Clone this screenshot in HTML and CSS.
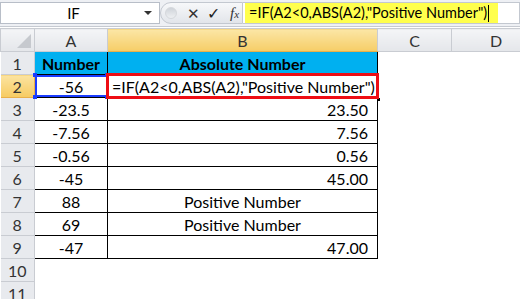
FILE: index.html
```html
<!DOCTYPE html>
<html lang="en">
<head>
    <meta charset="UTF-8">
    <title>IF ABS</title>
    <link rel="stylesheet" href="styles.css">
</head>
<body>

    <div class="formula-bar">
        <div class="name-box">
            <span class="name">IF</span>
            <span class="drop-arrow"></span>
        </div>
        <div class="fx-group">
            <span class="grip"></span>
            <span class="btn-cancel">✕</span>
            <span class="btn-enter">✓</span>
            <span class="btn-fx">f<small>x</small></span>
        </div>
        <div class="formula-input">
            <span class="formula-text">=IF(A2&lt;0,ABS(A2),"Positive Number")</span><span class="caret"></span>
        </div>
    </div>

    <table class="sheet">
        <colgroup>
            <col class="col-head">
            <col class="col-a">
            <col class="col-b">
            <col class="col-c">
            <col class="col-d">
        </colgroup>
        <thead>
            <tr>
                <th class="corner"><span class="corner-tri"></span></th>
                <th>A</th>
                <th class="sel">B</th>
                <th>C</th>
                <th>D</th>
            </tr>
        </thead>
        <tbody>
            <tr>
                <th>1</th>
                <td class="data title">Number</td>
                <td class="data title">Absolute Number</td>
                <td></td><td></td>
            </tr>
            <tr>
                <th class="sel">2</th>
                <td class="data center ref-a2">-56<span class="h tl"></span><span class="h tr"></span><span class="h bl"></span><span class="h br"></span></td>
                <td class="data editing">=IF(A2&lt;0,ABS(A2),"Positive Number")<span class="fill-handle"></span></td>
                <td></td><td></td>
            </tr>
            <tr>
                <th>3</th>
                <td class="data center">-23.5</td>
                <td class="data num">23.50</td>
                <td></td><td></td>
            </tr>
            <tr>
                <th>4</th>
                <td class="data center">-7.56</td>
                <td class="data num">7.56</td>
                <td></td><td></td>
            </tr>
            <tr>
                <th>5</th>
                <td class="data center">-0.56</td>
                <td class="data num">0.56</td>
                <td></td><td></td>
            </tr>
            <tr>
                <th>6</th>
                <td class="data center">-45</td>
                <td class="data num">45.00</td>
                <td></td><td></td>
            </tr>
            <tr>
                <th>7</th>
                <td class="data center">88</td>
                <td class="data center">Positive Number</td>
                <td></td><td></td>
            </tr>
            <tr>
                <th>8</th>
                <td class="data center">69</td>
                <td class="data center">Positive Number</td>
                <td></td><td></td>
            </tr>
            <tr>
                <th>9</th>
                <td class="data center">-47</td>
                <td class="data num">47.00</td>
                <td></td><td></td>
            </tr>
            <tr>
                <th>10</th>
                <td></td><td></td><td></td><td></td>
            </tr>
            <tr>
                <th>11</th>
                <td></td><td></td><td></td><td></td>
            </tr>
        </tbody>
    </table>

</body>
</html>
```

FILE: styles.css
```css
body {
    margin: 0;
    padding: 0;
    width: 520px;
    height: 299px;
    overflow: hidden;
    background-color: #fff;
    font-family: Lato, "Liberation Sans", sans-serif;
    color: #000;
}

/* barra de fórmulas */
.formula-bar {
    display: flex;
    height: 27px;
    padding-top: 2px;
    box-sizing: border-box;
    background-color: #eef0f4;
    border-bottom: 1px solid #c6cad1;
}

.name-box {
    display: flex;
    align-items: center;
    width: 160px;
    height: 22px;
    box-sizing: border-box;
    background-color: #fff;
    border: 1px solid #b8bec8;
}

.name {
    flex: 1;
    text-align: center;
    font-size: 15px;
    padding-left: 2px;
}

.drop-arrow {
    width: 0;
    height: 0;
    margin-right: 7px;
    border-left: 4px solid transparent;
    border-right: 4px solid transparent;
    border-top: 4px solid #333;
}

.fx-group {
    display: flex;
    align-items: center;
    width: 83px;
    height: 22px;
    box-sizing: border-box;
    background: linear-gradient(#f7f8fa, #e2e5ea);
    border: 1px solid #c3c8d0;
    border-radius: 11px 0 0 11px;
    padding-left: 4px;
}

.grip {
    width: 10px;
    height: 10px;
    border-radius: 50%;
    background: linear-gradient(#cfd3d9, #eef0f2);
    border: 1px solid #d5d8dc;
}

.btn-cancel {
    margin-left: 10px;
    font-size: 15px;
    color: #333;
}

.btn-enter {
    margin-left: 7px;
    font-size: 16px;
    color: #222;
}

.btn-fx {
    margin-left: 10px;
    font-family: "Liberation Serif", serif;
    font-style: italic;
    font-size: 15px;
    color: #333;
}

.btn-fx small {
    font-size: 11px;
}

.formula-input {
    display: flex;
    align-items: center;
    flex: 1;
    height: 22px;
    box-sizing: border-box;
    background-color: #fff;
    border: 1px solid #c3c8d0;
    border-left: none;
    padding-left: 2px;
}

.formula-text {
    background-color: #ffff4d;
    font-size: 14.5px;
    line-height: 20px;
    padding: 0 11px 0 4px;
}

.caret {
    width: 1px;
    height: 17px;
    margin-left: -10px;
    background-color: #000;
}

/* planilha */
.sheet {
    border-collapse: collapse;
    table-layout: fixed;
    width: 540px;
    margin-top: 1px;
}

.col-head { width: 34px; }
.col-a { width: 73px; }
.col-b { width: 270px; }
.col-c { width: 74px; }
.col-d { width: 89px; }

.sheet th {
    height: 22px;
    padding: 0;
    font-weight: normal;
    font-size: 16px;
    color: #333;
    text-align: center;
    background: linear-gradient(#f4f5f7, #e4e6ea);
    border: 1px solid #c9ccd2;
}

.sheet tbody th {
    background: #e8eaee;
    border-left: none;
}

.sheet th.sel {
    background: linear-gradient(#fbe6a6, #f6cd66);
    border-bottom-color: #e9b04a;
}

.sheet tbody th.sel {
    background: linear-gradient(#fbe3a0, #f6cb62);
    border-right-color: #e9b04a;
}

.corner {
    position: relative;
}

.corner-tri {
    position: absolute;
    right: 3px;
    bottom: 3px;
    width: 0;
    height: 0;
    border-left: 14px solid transparent;
    border-bottom: 14px solid #c6c9ce;
}

.sheet td {
    height: 22px;
    padding: 0 3px;
    font-size: 16px;
    white-space: nowrap;
    overflow: visible;
}

.sheet td.data {
    border: 1px solid #000;
}

.title {
    background-color: #00b0f0;
    font-weight: bold;
    text-align: center;
}

.center {
    text-align: center;
}

.num {
    text-align: right;
    padding-right: 9px !important;
}

.ref-a2 {
    position: relative;
    box-shadow: inset 0 2px 0 #1a3cff, inset 2px 0 0 #1a3cff, inset 0 -2px 0 #1a3cff;
}

.h {
    position: absolute;
    width: 4px;
    height: 4px;
    background-color: #1a3cff;
}

.tl { left: -2px; top: -2px; }
.tr { right: -2px; top: -2px; }
.bl { left: -2px; bottom: -2px; }
.br { right: -2px; bottom: -2px; }

.editing {
    position: relative;
    padding-left: 4px !important;
}

.editing::after {
    content: "";
    position: absolute;
    left: -2px;
    right: -2px;
    top: -2px;
    bottom: -2px;
    border: 3px solid #ee0d14;
}

.fill-handle {
    position: absolute;
    right: -3px;
    bottom: -4px;
    width: 3px;
    height: 3px;
    background-color: #000;
}
```
